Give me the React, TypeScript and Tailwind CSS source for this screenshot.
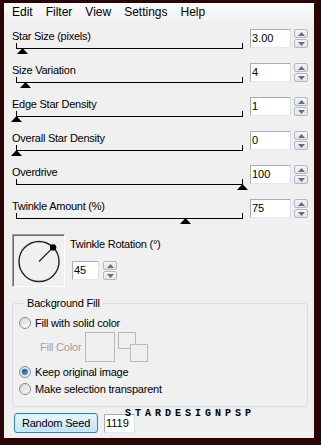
const SLIDERS = [
  { label: "Star Size (pixels)", value: "3.00", pos: 6 },
  { label: "Size Variation", value: "4", pos: 9 },
  { label: "Edge Star Density", value: "1", pos: 0 },
  { label: "Overall Star Density", value: "0", pos: 0 },
  { label: "Overdrive", value: "100", pos: 226 },
  { label: "Twinkle Amount (%)", value: "75", pos: 169 },
];

const MENU = ["Edit", "Filter", "View", "Settings", "Help"];

function Arrow({ down }: { down?: boolean }) {
  return (
    <svg width="7" height="4" viewBox="0 0 7 4">
      <polygon points={down ? "0,0 7,0 3.5,4" : "3.5,0 7,4 0,4"} fill="#5d6f98" />
    </svg>
  );
}

function Spinner() {
  return (
    <div className="flex h-[19px] w-[14px] flex-col gap-px">
      <div className="flex flex-1 items-center justify-center rounded-[2px] border border-[#b7b7b7] bg-gradient-to-b from-[#f6f6f6] to-[#e4e4e4]">
        <Arrow />
      </div>
      <div className="flex flex-1 items-center justify-center rounded-[2px] border border-[#b7b7b7] bg-gradient-to-b from-[#f6f6f6] to-[#e4e4e4]">
        <Arrow down />
      </div>
    </div>
  );
}

function NumBox({ value, w }: { value: string; w: string }) {
  return (
    <div
      className={`${w} h-[19px] border border-[#abadb3] border-b-[#e3e9ef] border-r-[#dbdfe6] bg-white pl-[1px] text-[11px] leading-[17px] text-black`}
    >
      {value}
    </div>
  );
}

function Radio({ checked }: { checked?: boolean }) {
  return (
    <div className="flex h-[12px] w-[12px] items-center justify-center rounded-full border border-[#8d8d8d] bg-gradient-to-br from-[#d6d6d6] to-[#fbfbfb]">
      {checked && (
        <div className="h-[6px] w-[6px] rounded-full bg-gradient-to-br from-[#0d3f7a] to-[#5cb3ec] shadow-[0_0_1px_#2a6fb5]" />
      )}
    </div>
  );
}

export default function App() {
  return (
    <div className="h-[445px] w-[321px] bg-[#2b0405] pb-[7px] pl-[4px] pr-[7px] pt-[3px] font-['Liberation_Sans',Arial,sans-serif] text-black">
      <div className="flex h-full flex-col bg-[#f0f0f0]">
        {/* menu */}
        <div className="flex h-[19px] items-center gap-[13px] bg-gradient-to-b from-[#fbfcfd] to-[#eef0f4] pl-[8px] text-[12px] leading-[19px]">
          {MENU.map((m) => (
            <span key={m}>{m}</span>
          ))}
        </div>

        <div className="mt-[7px] flex flex-col">
          {SLIDERS.map((s) => (
            <div key={s.label} className="flex h-[34px] items-start pl-[8px]">
              <div className="w-[238px]">
                <div className="h-[14px] text-[11px] leading-[14px] tracking-[-0.25px]">{s.label}</div>
                <div className="ml-[4px] h-[6px] w-[227px] border-x border-b border-black" />
                <div className="relative -mt-[1px] ml-[4px] h-[7px] w-[227px]">
                  <svg
                    className="absolute top-0"
                    style={{ left: s.pos - 5 }}
                    width="11"
                    height="6"
                    viewBox="0 0 11 6"
                  >
                    <polygon points="5.5,0 11,6 0,6" fill="#000" />
                  </svg>
                </div>
              </div>
              <NumBox value={s.value} w="w-[41px]" />
              <div className="ml-[3px]">
                <Spinner />
              </div>
            </div>
          ))}
        </div>

        {/* twinkle rotation */}
        <div className="ml-[8px] mt-[1px] flex items-start">
          <div className="h-[53px] w-[53px] border border-[#a0a0a0] border-b-white border-r-white shadow-[inset_1px_1px_0_#6d6d6d]">
            <svg width="51" height="51" viewBox="0 0 51 51">
              <circle cx="26" cy="26.5" r="20" fill="none" stroke="#222" strokeWidth="1.4" />
              <line x1="26" y1="26.5" x2="40.1" y2="12.4" stroke="#222" strokeWidth="1.3" />
              <circle cx="40.1" cy="12.4" r="3.2" fill="#000" />
            </svg>
          </div>
          <div className="ml-[5px] flex flex-col pt-[3px]">
            <div className="h-[14px] text-[11px] leading-[14px] tracking-[-0.25px]">Twinkle Rotation (°)</div>
            <div className="ml-[2px] mt-[10px] flex items-start gap-[4px]">
              <NumBox value="45" w="w-[27px]" />
              <Spinner />
            </div>
          </div>
        </div>

        {/* background fill */}
        <fieldset className="ml-[8px] mr-[6px] mt-[10px] rounded-[3px] border border-[#d5dfe5] pb-[9px] pl-[6px] text-[11px] tracking-[-0.2px]">
          <legend className="ml-[5px] px-[3px] leading-[13px]">Background Fill</legend>
          <div className="mt-[5px] flex h-[16px] items-center gap-[4px]">
            <Radio />
            <span>Fill with solid color</span>
          </div>
          <div className="mt-[1px] flex h-[30px] items-center pl-[21px]">
            <span className="w-[45px] text-[#a2a2a2]">Fill Color</span>
            <div className="h-[30px] w-[30px] border border-[#b9b9b9]" />
            <div className="relative ml-[3px] h-[30px] w-[31px]">
              <div className="absolute left-0 top-0 h-[17px] w-[18px] border border-[#b9b9b9]" />
              <div className="absolute left-[12px] top-[12px] h-[18px] w-[18px] border border-[#b9b9b9] bg-[#f0f0f0]" />
            </div>
          </div>
          <div className="mt-[2px] flex h-[16px] items-center gap-[4px]">
            <Radio checked />
            <span>Keep original image</span>
          </div>
          <div className="mt-[1px] flex h-[16px] items-center gap-[4px]">
            <Radio />
            <span>Make selection transparent</span>
          </div>
        </fieldset>

        {/* bottom */}
        <div className="relative ml-[10px] mt-[6px] flex items-start gap-[6px]">
          <div className="flex h-[20px] w-[84px] items-center justify-center rounded-[3px] border border-[#3c7fb1] bg-gradient-to-b from-[#eaf6fd] to-[#bfe3f7] text-[11px] tracking-[-0.2px] shadow-[inset_0_0_0_1px_#c9ecfc]">
            Random Seed
          </div>
          <div className="mt-[1px]">
            <NumBox value="1119" w="w-[31px]" />
          </div>
          <span className="absolute left-[111px] top-[-4px] font-['Liberation_Mono',monospace] text-[10px] font-bold leading-[10px] tracking-[4px]">
            STARDESIGNPSP
          </span>
        </div>
      </div>
    </div>
  );
}
